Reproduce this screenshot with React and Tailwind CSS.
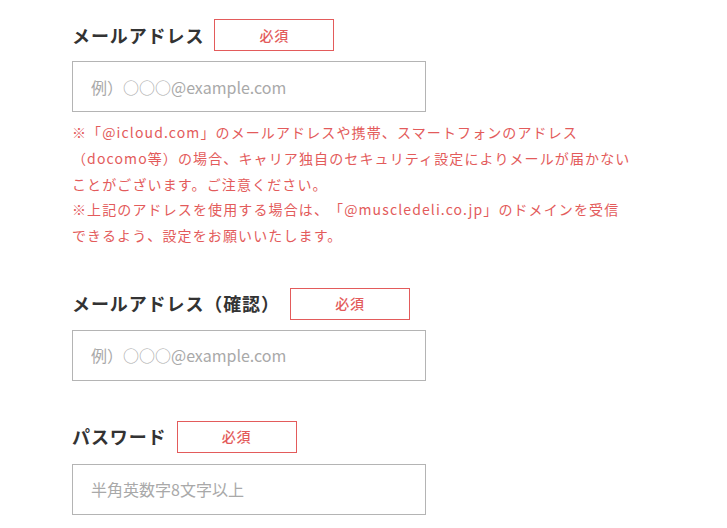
import React from "react";

const Badge = () => (
  <span className="ml-[10px] flex h-[32px] w-[120px] items-center justify-center border border-[#e35b5b] text-[14px] font-medium tracking-[0.05em] text-[#e35b5b]">
    必須
  </span>
);

const Field = ({ label, placeholder, className = "", inputClass = "mt-[10px]" }) => (
  <div className={className}>
    <div className="flex items-center">
      <span className="text-[18px] font-bold tracking-[0.05em] text-[#333333]">{label}</span>
      <Badge />
    </div>
    <input
      type="text"
      placeholder={placeholder}
      className={`${inputClass} block h-[51px] w-[354px] border border-[#b4b4b4] bg-white px-[18px] text-[16px] text-[#333] outline-none placeholder:text-[#a9a9a9]`}
    />
  </div>
);

export default function App() {
  return (
    <div
      className="min-h-screen w-[727px] bg-white pl-[72px] pt-[19px]"
      style={{ fontFamily: '"Noto Sans CJK JP", "Noto Sans", sans-serif' }}
    >
      <Field label="メールアドレス" placeholder="例）○○○@example.com" />

      <div className="mt-[8px] whitespace-nowrap text-[14px] leading-[25.8px] tracking-[0.08em] text-[#e35b5b] [text-spacing-trim:space-all]">
        <p>
          ※「@icloud.com」のメールアドレスや携帯、スマートフォンのアドレス
          <br />
          （docomo等）の場合、キャリア独自のセキュリティ設定によりメールが届かない
          <br />
          ことがございます。ご注意ください。
        </p>
        <p>
          ※上記のアドレスを使用する場合は、「@muscledeli.co.jp」のドメインを受信
          <br />
          できるよう、設定をお願いいたします。
        </p>
      </div>

      <Field className="mt-[39px]" label="メールアドレス（確認）" placeholder="例）○○○@example.com" />

      <Field
        className="mt-[40px]"
        inputClass="mt-[11px]"
        label="パスワード"
        placeholder="半角英数字8文字以上"
      />
    </div>
  );
}
